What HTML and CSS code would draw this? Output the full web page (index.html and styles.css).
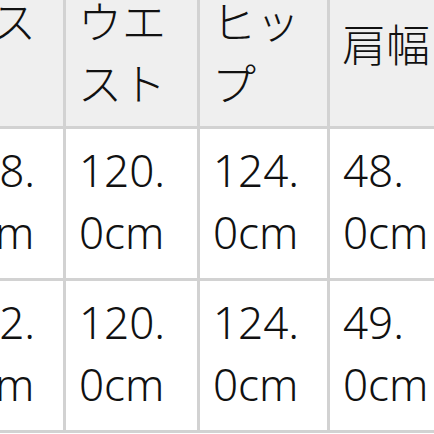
FILE: index.html
```html
<!DOCTYPE html>
<html lang="ja">
<head>
<meta charset="utf-8">
<link rel="stylesheet" href="styles.css">
</head>
<body>
<div class="viewport">
  <table class="size-table">
    <colgroup>
      <col class="c1"><col class="c2"><col class="c3"><col class="c4">
    </colgroup>
    <thead>
      <tr>
        <th>バス<br>ト</th>
        <th>ウエ<br>スト</th>
        <th>ヒッ<br>プ</th>
        <th class="single">肩幅</th>
      </tr>
    </thead>
    <tbody>
      <tr>
        <td>118.<br>0cm</td>
        <td>120.<br>0cm</td>
        <td>124.<br>0cm</td>
        <td>48.<br>0cm</td>
      </tr>
      <tr>
        <td>122.<br>0cm</td>
        <td>120.<br>0cm</td>
        <td>124.<br>0cm</td>
        <td>49.<br>0cm</td>
      </tr>
    </tbody>
  </table>
</div>
</body>
</html>
```

FILE: styles.css
```css
html, body {
  margin: 0;
  padding: 0;
  background: #ffffff;
  overflow: hidden;
}

.viewport {
  width: 434px;
  height: 434px;
  overflow: hidden;
}

.size-table {
  margin-left: -67px;
  margin-top: -26px;
  border-collapse: collapse;
  table-layout: fixed;
  width: 530px;
  font-family: "Noto Sans", "Noto Sans CJK JP", sans-serif;
  font-size: 44px;
  font-weight: 300;
  line-height: 62px;
  color: #111111;
}

.c1 { width: 130px; }
.c2 { width: 134px; }
.c3 { width: 130px; }
.c4 { width: 136px; }

.size-table th,
.size-table td {
  border: 3px solid #d2d2d2;
  padding: 10px 12px 15px 13px;
  text-align: left;
  vertical-align: middle;
  font-weight: 300;
  white-space: nowrap;
}

.size-table th {
  background: #efefef;
  font-family: "Noto Sans CJK JP", sans-serif;
  font-size: 44px;
  padding: 12px 12px 13px 12px;
}

.size-table th.single {
  padding-top: 4px;
  padding-bottom: 21px;
}

.size-table td {
  background: #ffffff;
}
```
